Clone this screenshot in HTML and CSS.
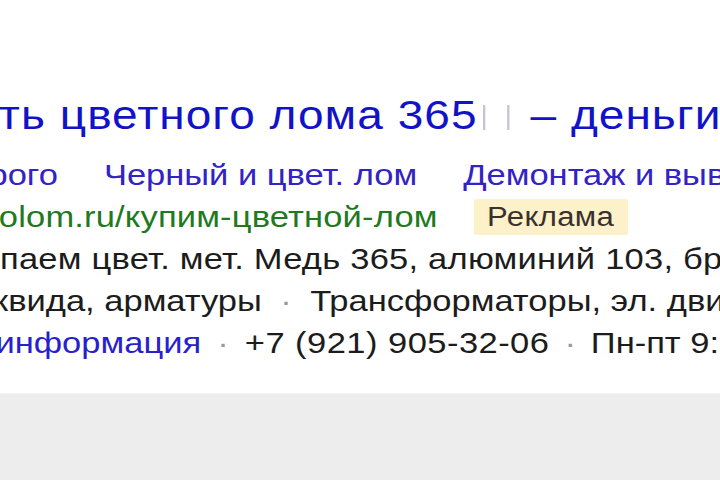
FILE: index.html
```html
<!DOCTYPE html>
<html lang="ru">
<head>
<meta charset="utf-8">
<link rel="stylesheet" href="styles.css">
</head>
<body>
<div class="page">
  <section class="ad-area">
    <div class="ad">
      <div class="title">
        <a class="title-link cut-title">ть цветного лома 365</a><span class="missing"></span><span class="missing second"></span><a class="title-link tail">– деньги сразу</a>
      </div>
      <div class="row sitelinks">
        <a class="sitelink cut-sl">рого</a>
        <a class="sitelink">Черный и цвет. лом</a>
        <a class="sitelink">Демонтаж и вывоз</a>
      </div>
      <div class="row url-row">
        <span class="url cut-url">olom.ru/купим-цветной-лом</span>
        <span class="badge">Реклама</span>
      </div>
      <div class="row text wide">паем цвет. мет. Медь 365, алюминий 103, бронза</div>
      <div class="row text cut-r2">квида, арматуры<span class="dot">·</span>Трансформаторы, эл. двигатели</div>
      <div class="row text cut-r3"><a class="info">информация</a><span class="dot tight">·</span><span class="phone">+7 (921) 905-32-06</span><span class="dot tighter">·</span>Пн-пт 9:00-18:00</div>
    </div>
  </section>
  <footer class="footer"></footer>
</div>
</body>
</html>
```
FILE: styles.css
```css
html, body {
  margin: 0;
  padding: 0;
  background: #ffffff;
}
.page {
  width: 720px;
  height: 480px;
  overflow: hidden;
  display: flex;
  flex-direction: column;
}
.ad-area {
  height: 393px;
  overflow: hidden;
  flex: none;
}
.ad {
  padding-top: 92px;
  white-space: nowrap;
  font-family: "Liberation Sans", Arial, sans-serif;
  transform: scaleX(1.15);
  transform-origin: 0 0;
}
.title {
  font-size: 40px;
  line-height: 46px;
  letter-spacing: 0.9px;
  display: flex;
  align-items: center;
}
.title-link {
  color: #1212c8;
}
.cut-title {
  margin-left: -1px;
}
.missing {
  display: inline-block;
  flex: none;
  width: 2px;
  height: 25px;
  background: #c4c4d6;
  margin-left: 5px;
  margin-top: 4px;
}
.missing.second {
  margin-left: 19px;
}
.tail {
  margin-left: 18px;
}
.row {
  font-size: 30px;
  line-height: 42px;
  color: #1c1c1c;
}
.wide {
  letter-spacing: 0.2px;
}
.sitelinks {
  margin-top: 16px;
  display: flex;
  gap: 40px;
}
.sitelink {
  color: #3322c4;
}
.cut-sl {
  margin-left: -10px;
}
.url-row {
  display: flex;
  align-items: center;
}
.url {
  color: #1f7a1f;
  letter-spacing: 0.15px;
}
.cut-url {
  margin-left: -1px;
}
.badge {
  display: inline-block;
  margin-left: 31px;
  padding: 0 12px;
  height: 36px;
  line-height: 36px;
  font-size: 27px;
  letter-spacing: 0.3px;
  background: #fcf1c8;
  color: #3a3030;
  border-radius: 2px;
}
.cut-r2 {
  margin-left: -6px;
}
.cut-r3 {
  margin-left: -4px;
}
.info {
  color: #2a1fcc;
}
.phone {
  letter-spacing: 0.4px;
}
.dot {
  color: #9a9a9a;
  padding: 0 16px;
}
.dot.tight {
  padding: 0 14px;
}
.dot.tighter {
  padding: 0 13px;
}
.footer {
  flex: 1;
  background: #ededed;
  border-top: 1px solid #f3f3f3;
}
```
